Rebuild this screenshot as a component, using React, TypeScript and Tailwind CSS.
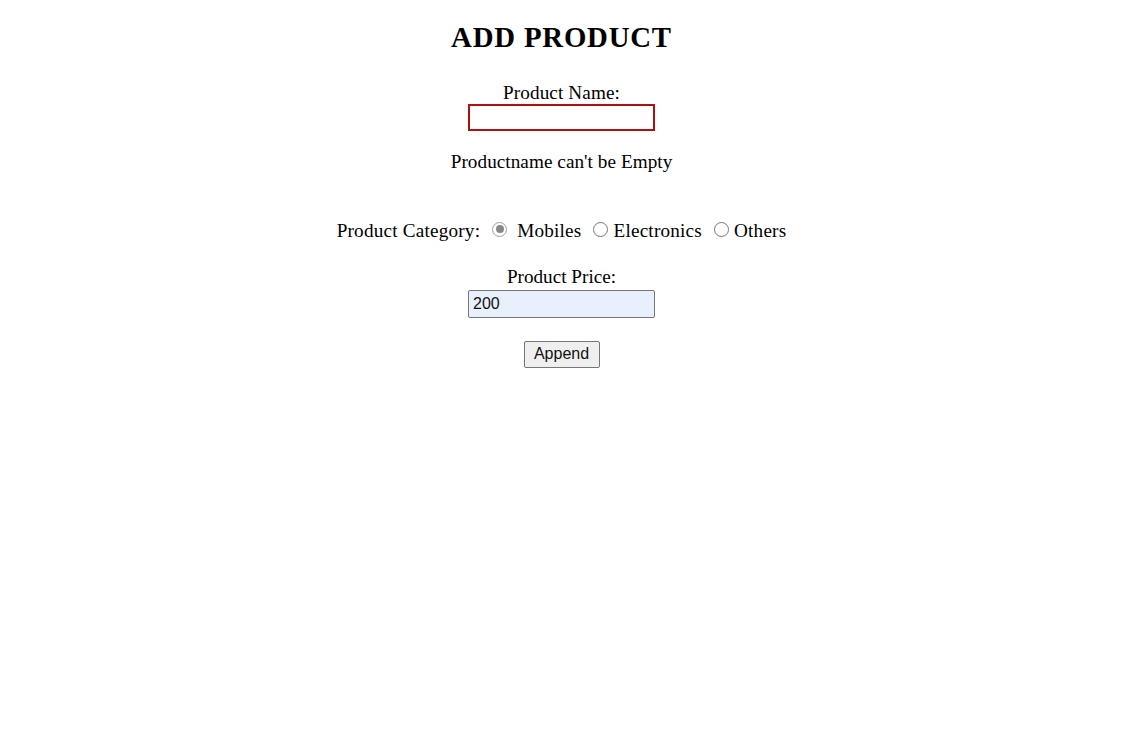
import React from "react";

function Radio({ checked }: { checked?: boolean }) {
  if (checked) {
    return (
      <span className="inline-block align-baseline ml-[7px] mr-[5px] w-[15px] h-[15px] rounded-full border border-[#a0a0a0] bg-white relative">
        <span className="absolute left-[2.5px] top-[2.5px] w-[8px] h-[8px] rounded-full bg-[#888888]" />
      </span>
    );
  }
  return (
    <span className="inline-block align-baseline ml-[7px] mr-[5px] w-[15px] h-[15px] rounded-full border border-[#767676] bg-white" />
  );
}

export default function App() {
  return (
    <div className="min-h-[740px] w-full bg-white text-black font-['Liberation_Serif','Times_New_Roman',serif] text-[19.2px]">
      <div className="flex flex-col items-center pr-[15px]">
        <h2 className="mt-[21px] h-[32px] leading-[32px] text-[28.8px] font-bold tracking-[0.8px]">
          ADD PRODUCT
        </h2>
        <div className="mt-[28.5px] h-[22px] leading-[22px] tracking-[0.1px]">Product Name:</div>
        <input
          className="mt-[0.5px] w-[187px] h-[27px] border-2 border-[#b01010] bg-white outline-none px-[3px] font-['Liberation_Sans',Arial,sans-serif] text-[16px]"
          readOnly
          value=""
        />
        <div className="mt-[19.5px] h-[22px] leading-[22px] tracking-[0.05px]">Productname can't be Empty</div>
        <div className="mt-[47px] h-[22px] leading-[22px] whitespace-pre tracking-[0.2px]">
          Product Category: <Radio checked /> Mobiles <Radio />Electronics <Radio />Others
        </div>
        <div className="mt-[24px] h-[22px] leading-[22px]">Product Price:</div>
        <input
          className="mt-[2px] w-[187px] h-[28px] border border-[#767676] rounded-[2px] bg-[#e8f0fe] outline-none pl-[4px] font-['Liberation_Sans',Arial,sans-serif] text-[16px] text-[#111]"
          readOnly
          value="200"
        />
        <button className="mt-[23px] w-[76px] h-[27px] border border-[#767676] rounded-[2px] bg-[#efefef] font-['Liberation_Sans',Arial,sans-serif] text-[16px] text-[#111] leading-none">
          Append
        </button>
      </div>
    </div>
  );
}
